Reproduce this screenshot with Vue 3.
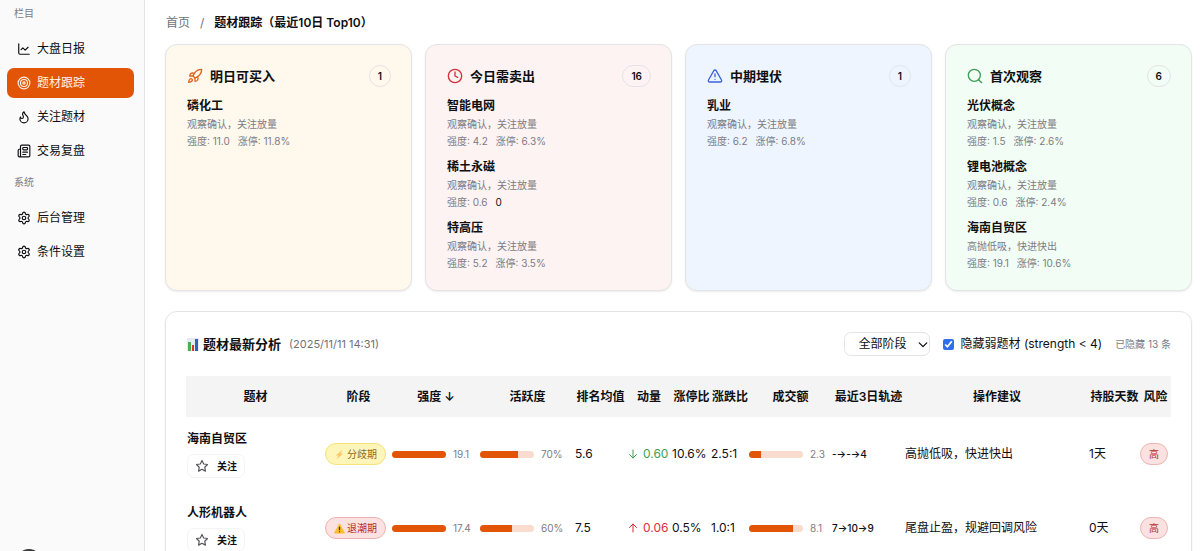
<template>
  <div class="layout">
    <aside class="sidebar">
      <nav v-for="group in menu" :key="group.label" class="menu-group">
        <div class="menu-label">{{ group.label }}</div>
        <a
          v-for="item in group.items"
          :key="item.text"
          href="#"
          class="menu-item"
          :class="{ active: item.active }"
        >
          <svg class="icon" viewBox="0 0 24 24" v-html="icons[item.icon]"></svg>
          <span>{{ item.text }}</span>
        </a>
      </nav>
    </aside>

    <main class="main">
      <div class="breadcrumb">
        <a href="#">首页</a>
        <span class="sep">/</span>
        <span class="current">题材跟踪（最近10日 Top10）</span>
      </div>

      <div class="cards">
        <section v-for="card in cards" :key="card.title" class="card" :class="card.color">
          <header class="card-header">
            <svg class="icon card-icon" viewBox="0 0 24 24" v-html="icons[card.icon]"></svg>
            <h2>{{ card.title }}</h2>
            <span class="count">{{ card.count }}</span>
          </header>
          <div v-for="item in card.items" :key="item.name" class="card-item">
            <div class="item-name">{{ item.name }}</div>
            <div class="item-text">{{ item.advice }}</div>
            <div class="item-text metrics">
              <span>强度: {{ item.strength }}</span>
              <span v-if="item.limit">涨停: {{ item.limit }}</span>
              <span v-else class="zero">0</span>
            </div>
          </div>
        </section>
      </div>

      <section class="panel">
        <header class="panel-header">
          <svg class="chart-icon" viewBox="0 0 12 13">
            <rect width="12" height="13" fill="#e3eaf0" />
            <rect x="1" y="4" width="3" height="9" fill="#4caf50" />
            <rect x="5" y="7" width="2" height="6" fill="#d3382f" />
            <rect x="8" y="1" width="3" height="12" fill="#2f62b8" />
          </svg>
          <h2>题材最新分析</h2>
          <span class="time">(2025/11/11 14:31)</span>
          <div class="filters">
            <div class="select-wrap">
              <select v-model="stage" aria-label="阶段">
                <option value="all">全部阶段</option>
                <option value="split">分歧期</option>
                <option value="ebb">退潮期</option>
              </select>
              <svg class="icon chevron" viewBox="0 0 24 24"><path d="m3 7 9 9 9-9" /></svg>
            </div>
            <label class="check">
              <input v-model="hideWeak" type="checkbox" />
              <span>隐藏弱题材 (strength &lt; 4)</span>
            </label>
            <span class="hidden-count">已隐藏 13 条</span>
          </div>
        </header>

        <table>
          <thead>
            <tr>
              <th class="c-name">题材</th>
              <th class="c-stage">阶段</th>
              <th class="c-strength">强度 ↓</th>
              <th class="c-active">活跃度</th>
              <th class="c-rank">排名均值</th>
              <th class="c-momentum">动量</th>
              <th class="c-limit">涨停比</th>
              <th class="c-ratio">涨跌比</th>
              <th class="c-volume">成交额</th>
              <th class="c-trace">最近3日轨迹</th>
              <th>操作建议</th>
              <th class="c-days">持股天数</th>
              <th class="c-risk">风险</th>
            </tr>
          </thead>
          <tbody>
            <tr v-for="row in rows" :key="row.name">
              <td>
                <div class="topic">{{ row.name }}</div>
                <button type="button" class="follow">
                  <svg class="icon" viewBox="0 0 24 24" v-html="icons.star"></svg>
                  <span>关注</span>
                </button>
              </td>
              <td>
                <span class="stage" :class="row.stageType">
                  <svg v-if="row.stageType === 'split'" class="stage-icon" viewBox="0 0 12 12">
                    <path d="M9.500.5 2 7h3L2.500 11.500 10 5H7z" fill="#fbc56b" />
                  </svg>
                  <svg v-else class="stage-icon" viewBox="0 0 12 12">
                    <path d="M6 1 11.500 11H.5z" fill="#fbc02d" stroke="#fbc02d" stroke-linejoin="round" />
                    <path d="M6 4v4M6 9v1" stroke="#3a3426" stroke-width="1.400" />
                  </svg>
                  {{ row.stage }}
                </span>
              </td>
              <td>
                <div class="meter">
                  <div class="track"><div class="fill" :style="{ width: row.strengthPct + '%' }"></div></div>
                  <span>{{ row.strength }}</span>
                </div>
              </td>
              <td>
                <div class="meter">
                  <div class="track"><div class="fill" :style="{ width: row.active + '%' }"></div></div>
                  <span>{{ row.active }}%</span>
                </div>
              </td>
              <td>{{ row.rank }}</td>
              <td>
                <span class="momentum" :class="row.trend">
                  <svg class="icon" viewBox="0 0 24 24" v-html="icons[row.trend]"></svg>
                  {{ row.momentum }}
                </span>
              </td>
              <td>{{ row.limit }}</td>
              <td>{{ row.upDown }}</td>
              <td>
                <div class="meter">
                  <div class="track"><div class="fill" :style="{ width: row.volume * 10 + '%' }"></div></div>
                  <span>{{ row.volume }}</span>
                </div>
              </td>
              <td class="trace">{{ row.trace }}</td>
              <td>{{ row.advice }}</td>
              <td>{{ row.days }}天</td>
              <td><span class="risk">{{ row.risk }}</span></td>
            </tr>
          </tbody>
        </table>
      </section>
    </main>

    <div class="float-dot"></div>
  </div>
</template>

<script setup>
import { ref } from 'vue'

const stage = ref('all')
const hideWeak = ref(true)

const icons = {
  chart: '<path d="M3 3v16a2 2 0 0 0 2 2h16"/><path d="m19 9-5 5-4-4-3 3"/>',
  target: '<circle cx="12" cy="12" r="10"/><circle cx="12" cy="12" r="6"/><circle cx="12" cy="12" r="2"/>',
  flame: '<path d="M12 3q1 4 4 6.5t3 5.500a1 1 0 0 1-14 0 5 5 0 0 1 1-3 1 1 0 0 0 5 0c0-2-1.500-3-1.500-5q0-2 2.500-4"/>',
  news: '<path d="M15 18h-5M18 14h-8"/><path d="M4 22h16a2 2 0 0 0 2-2V4a2 2 0 0 0-2-2H8a2 2 0 0 0-2 2v16a2 2 0 0 1-4 0v-9a2 2 0 0 1 2-2h2"/><rect x="10" y="6" width="8" height="4" rx="1"/>',
  settings: '<path d="M9.671 4.136a2.340 2.340 0 0 1 4.659 0 2.340 2.340 0 0 0 3.319 1.915 2.340 2.340 0 0 1 2.330 4.033 2.340 2.340 0 0 0 0 3.831 2.340 2.340 0 0 1-2.330 4.033 2.340 2.340 0 0 0-3.319 1.915 2.340 2.340 0 0 1-4.659 0 2.340 2.340 0 0 0-3.320-1.915 2.340 2.340 0 0 1-2.330-4.033 2.340 2.340 0 0 0 0-3.831A2.340 2.340 0 0 1 6.350 6.051a2.340 2.340 0 0 0 3.319-1.915"/><circle cx="12" cy="12" r="3"/>',
  rocket: '<path d="M4.500 16.500c-1.500 1.260-2 5-2 5s3.740-.5 5-2c.71-.84.7-2.130-.09-2.910a2.180 2.180 0 0 0-2.910-.09z"/><path d="m12 15-3-3a22 22 0 0 1 2-3.950A12.880 12.880 0 0 1 22 2c0 2.720-.78 7.500-6 11a22.350 22.350 0 0 1-4 2z"/><path d="M9 12H4s.55-3.030 2-4c1.620-1.080 5 0 5 0"/><path d="M12 15v5s3.030-.55 4-2c1.080-1.620 0-5 0-5"/>',
  clock: '<circle cx="12" cy="12" r="10"/><path d="M12 6v6l4 2"/>',
  alert: '<path d="m21.730 18-8-14a2 2 0 0 0-3.480 0l-8 14A2 2 0 0 0 4 21h16a2 2 0 0 0 1.730-3"/><path d="M12 9v4M12 17h.01"/>',
  search: '<circle cx="11" cy="11" r="9"/><path d="m22 22-4.500-4.500"/>',
  star: '<path d="M12 2.500l2.900 6.100 6.600.9-4.800 4.600 1.200 6.700-5.900-3.200-5.900 3.200 1.200-6.700L2.500 9.500l6.600-.9z"/>',
  down: '<path d="M12 4v16M5 13l7 7 7-7"/>',
  up: '<path d="M12 20V4M5 11l7-7 7 7"/>'
}

const menu = [
  {
    label: '栏目',
    items: [
      { text: '大盘日报', icon: 'chart' },
      { text: '题材跟踪', icon: 'target', active: true },
      { text: '关注题材', icon: 'flame' },
      { text: '交易复盘', icon: 'news' }
    ]
  },
  {
    label: '系统',
    items: [
      { text: '后台管理', icon: 'settings' },
      { text: '条件设置', icon: 'settings' }
    ]
  }
]

const cards = [
  {
    title: '明日可买入',
    icon: 'rocket',
    color: 'orange',
    count: 1,
    items: [{ name: '磷化工', advice: '观察确认，关注放量', strength: '11.0', limit: '11.8%' }]
  },
  {
    title: '今日需卖出',
    icon: 'clock',
    color: 'red',
    count: 16,
    items: [
      { name: '智能电网', advice: '观察确认，关注放量', strength: '4.2', limit: '6.3%' },
      { name: '稀土永磁', advice: '观察确认，关注放量', strength: '0.6' },
      { name: '特高压', advice: '观察确认，关注放量', strength: '5.2', limit: '3.5%' }
    ]
  },
  {
    title: '中期埋伏',
    icon: 'alert',
    color: 'blue',
    count: 1,
    items: [{ name: '乳业', advice: '观察确认，关注放量', strength: '6.2', limit: '6.8%' }]
  },
  {
    title: '首次观察',
    icon: 'search',
    color: 'green',
    count: 6,
    items: [
      { name: '光伏概念', advice: '观察确认，关注放量', strength: '1.5', limit: '2.6%' },
      { name: '锂电池概念', advice: '观察确认，关注放量', strength: '0.6', limit: '2.4%' },
      { name: '海南自贸区', advice: '高抛低吸，快进快出', strength: '19.1', limit: '10.6%' }
    ]
  }
]

const rows = [
  {
    name: '海南自贸区',
    stage: '分歧期',
    stageType: 'split',
    strength: '19.1',
    strengthPct: 100,
    active: 70,
    rank: '5.6',
    trend: 'down',
    momentum: '0.60',
    limit: '10.6%',
    upDown: '2.5:1',
    volume: 2.3,
    trace: '-→-→4',
    advice: '高抛低吸，快进快出',
    days: 1,
    risk: '高'
  },
  {
    name: '人形机器人',
    stage: '退潮期',
    stageType: 'ebb',
    strength: '17.4',
    strengthPct: 100,
    active: 60,
    rank: '7.5',
    trend: 'up',
    momentum: '0.06',
    limit: '0.5%',
    upDown: '1.0:1',
    volume: 8.1,
    trace: '7→10→9',
    advice: '尾盘止盈，规避回调风险',
    days: 0,
    risk: '高'
  }
]
</script>

<style>
body {
  margin: 0;
  background: #fff;
}
</style>

<style scoped>
.layout {
  display: flex;
  height: 100vh;
  overflow: hidden;
  font-family: Inter, 'Noto Sans CJK SC', sans-serif;
  font-size: 12px;
  line-height: 16px;
  color: #0f0f12;
}

.layout * {
  box-sizing: border-box;
}

a {
  color: inherit;
  text-decoration: none;
}

h2 {
  margin: 0;
  font-size: 13px;
  font-weight: 600;
  line-height: 20px;
}

.icon {
  width: 14px;
  height: 14px;
  flex: none;
  fill: none;
  stroke: currentColor;
  stroke-width: 2;
  stroke-linecap: round;
  stroke-linejoin: round;
}

/* sidebar */
.sidebar {
  width: 145px;
  flex: none;
  padding: 0 10px 0 7px;
  background: #fafafa;
  border-right: 1px solid #e4e4e7;
}

.menu-group {
  display: flex;
  flex-direction: column;
  gap: 4px;
}

.menu-group + .menu-group {
  margin-top: 3px;
}

.menu-label {
  padding: 0 7px;
  margin-bottom: 3px;
  font-size: 10px;
  line-height: 27px;
  color: #7c7c85;
}

.menu-item {
  display: flex;
  align-items: center;
  gap: 6px;
  height: 30px;
  padding: 0 10px;
  border-radius: 7px;
}

.menu-item span {
  line-height: 18px;
}

.menu-item.active {
  background: #e25507;
  color: #fff1e6;
}

/* main */
.main {
  flex: 1;
  min-width: 0;
  padding: 15px 8px 20px 20px;
  overflow-y: auto;
  scrollbar-width: none;
}

.breadcrumb {
  display: flex;
  gap: 10px;
  padding-left: 1px;
  margin-bottom: 13px;
  color: #71717a;
}

.breadcrumb .current {
  font-weight: 600;
  color: #0f0f12;
}

.cards {
  display: grid;
  grid-template-columns: repeat(4, 1fr);
  gap: 13px;
  margin-bottom: 20px;
}

.card {
  padding: 20px 20px 18px 21px;
  border: 1px solid #e4e4e7;
  border-radius: 12px;
  box-shadow: 0 1px 2px rgba(0, 0, 0, 0.08);
}

.card.orange {
  background: #fff8ec;
}

.card.red {
  background: #fcf3f2;
}

.card.blue {
  background: #eff5fe;
}

.card.green {
  background: #f2fdf5;
}

.orange .card-icon {
  color: #e0641c;
}

.red .card-icon {
  color: #d5303b;
}

.blue .card-icon {
  color: #3b63dd;
}

.green .card-icon {
  color: #3f9e56;
}

.card-header {
  display: flex;
  align-items: center;
  gap: 7px;
  margin-bottom: 8px;
}

.card-icon {
  width: 16px;
  height: 16px;
}

.count {
  min-width: 22px;
  height: 22px;
  margin-left: auto;
  padding: 0 8px;
  border: 1px solid #e4e4e7;
  border-radius: 11px;
  font-size: 10px;
  font-weight: 600;
  line-height: 20px;
  text-align: center;
}

.card-item + .card-item {
  margin-top: 6px;
}

.item-name {
  font-weight: 600;
  line-height: 21px;
}

.item-text {
  font-size: 10px;
  line-height: 17px;
  color: #7c7c85;
}

.metrics {
  display: flex;
  gap: 8px;
}

.zero {
  color: #0f0f12;
}

/* panel */
.panel {
  padding: 20px;
  border: 1px solid #e4e4e7;
  border-radius: 12px;
  box-shadow: 0 1px 2px rgba(0, 0, 0, 0.08);
}

.panel-header {
  display: flex;
  align-items: center;
  height: 24px;
  margin-bottom: 20px;
}

.chart-icon {
  width: 12px;
  height: 13px;
  margin: 0 4px 0 1px;
}

.time {
  margin-left: 8px;
  font-size: 11px;
  color: #71717a;
}

.filters {
  display: flex;
  align-items: center;
  gap: 13px;
  margin-left: auto;
}

.select-wrap {
  position: relative;
}

select {
  display: block;
  width: 86px;
  height: 24px;
  padding: 0 14px;
  border: 1px solid #e4e4e7;
  border-radius: 7px;
  background: #fff;
  font: inherit;
  color: inherit;
  appearance: none;
}

.chevron {
  position: absolute;
  top: 8px;
  right: 2px;
  width: 10px;
  height: 10px;
  stroke-width: 3;
  pointer-events: none;
}

.check {
  display: flex;
  align-items: center;
  gap: 7px;
}

.check input {
  width: 11px;
  height: 11px;
  margin: 0;
  accent-color: #2f6fed;
}

.hidden-count {
  font-size: 10px;
  color: #7c7c85;
}

/* table */
table {
  width: 100%;
  table-layout: fixed;
  border-collapse: collapse;
  white-space: nowrap;
}

th {
  height: 41px;
  padding: 0;
  background: #f4f4f5;
  font-weight: 600;
  text-align: center;
}

td {
  height: 74px;
  padding: 0;
}

td:first-child {
  padding-left: 1px;
}

.c-name {
  width: 139px;
}

.c-stage {
  width: 67px;
}

.c-strength {
  width: 88px;
}

.c-active {
  width: 95px;
}

.c-rank {
  width: 51px;
}

.c-momentum {
  width: 46px;
}

.c-limit {
  width: 39px;
}

.c-ratio {
  width: 38px;
}

.c-volume {
  width: 83px;
}

.c-trace {
  width: 73px;
}

.c-days {
  width: 51px;
}

.c-risk {
  width: 31px;
}

.topic {
  margin-bottom: 7px;
  font-weight: 600;
}

.follow {
  display: flex;
  align-items: center;
  gap: 8px;
  height: 24px;
  padding: 0 7px;
  border: 1px solid #f4f4f5;
  border-radius: 7px;
  background: #fff;
  font: inherit;
  font-size: 10px;
  font-weight: 600;
  color: inherit;
}

.follow .icon {
  color: #55555c;
}

.stage,
.risk {
  display: inline-flex;
  align-items: center;
  gap: 2px;
  height: 22px;
  padding: 0 8px;
  border: 1px solid;
  border-radius: 11px;
  font-size: 10px;
}

.stage-icon {
  width: 11px;
  height: 11px;
}

.stage.split {
  background: #fef6b8;
  border-color: #f6e27a;
  color: #94661a;
}

.stage.ebb,
.risk {
  background: #fce1e1;
  border-color: #f0b3b3;
  color: #b52c2c;
}

.meter {
  display: flex;
  align-items: center;
  gap: 7px;
  font-size: 10px;
  color: #7c7c85;
}

.track {
  width: 54px;
  height: 7px;
  overflow: hidden;
  border-radius: 4px;
  background: #f9dccd;
}

.fill {
  height: 100%;
  background: #e25507;
}

.momentum {
  display: flex;
  align-items: center;
  gap: 4px;
  padding-left: 1px;
}

.momentum .icon {
  width: 12px;
  height: 12px;
}

.momentum.down {
  color: #3f9e56;
}

.momentum.up {
  color: #d5303b;
}

.trace {
  font-size: 10px;
  font-weight: 500;
}

/* round floating button that peeks over the bottom edge */
.float-dot {
  position: fixed;
  bottom: -24px;
  left: 16px;
  width: 26px;
  height: 26px;
  border-radius: 50%;
  background: #3a3a3e;
}
</style>
